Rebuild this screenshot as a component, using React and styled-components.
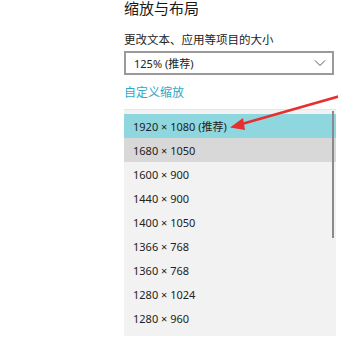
import styled, { createGlobalStyle } from 'styled-components'

const Global = createGlobalStyle`
  html, body {
    margin: 0;
    padding: 0;
    background: #ffffff;
  }
  body {
    font-family: "Noto Sans", "Noto Sans CJK SC", sans-serif;
    color: #1f1f1f;
    overflow: hidden;
  }
`

const Page = styled.div`
  position: relative;
  width: 338px;
  height: 339px;
  overflow: hidden;
  padding-left: 124px;
  box-sizing: border-box;
`

const Title = styled.h2`
  margin: 0;
  font-family: "Noto Sans CJK SC", sans-serif;
  font-size: 15px;
  font-weight: 400;
  line-height: 16px;
  color: #1a1a1a;
`

const Label = styled.div`
  margin-top: 16px;
  font-family: "Noto Sans CJK SC", sans-serif;
  font-size: 11.5px;
  line-height: 14px;
  color: #222;
`

const Select = styled.div`
  margin-top: 5px;
  width: 210px;
  height: 24px;
  box-sizing: border-box;
  border: 2px solid #9a9a9a;
  display: flex;
  align-items: center;
  justify-content: space-between;
  padding: 0 6px 0 8px;
  font-size: 11px;
  color: #222;
`

const Link = styled.div`
  margin-top: 9px;
  font-family: "Noto Sans CJK SC", sans-serif;
  font-size: 12px;
  line-height: 15px;
  color: #2fa9c4;
`

const List = styled.div`
  position: relative;
  margin-top: 10px;
  width: 212px;
  height: 227px;
  background: #f2f2f2;
  padding-top: 4px;
  box-sizing: border-box;
  border-top: 1px solid #e6e6e6;
`

const Row = styled.div`
  height: 24px;
  display: flex;
  align-items: center;
  padding-left: 9px;
  font-size: 11px;
  color: #222;
  background: ${p => (p.$selected ? '#8fd7de' : p.$hover ? '#d8d8d8' : 'transparent')};
`

const Scrollbar = styled.div`
  position: absolute;
  right: 2px;
  top: 1px;
  width: 2px;
  height: 127px;
  background: #8a8a8a;
`

const Arrow = styled.svg`
  position: absolute;
  left: 0;
  top: 0;
  pointer-events: none;
`

const items = [
  '1920 × 1080 (推荐)',
  '1680 × 1050',
  '1600 × 900',
  '1440 × 900',
  '1400 × 1050',
  '1366 × 768',
  '1360 × 768',
  '1280 × 1024',
  '1280 × 960',
]

export default function App() {
  return (
    <Page>
      <Global />
      <Title>缩放与布局</Title>
      <Label>更改文本、应用等项目的大小</Label>
      <Select>
        <span>125% (推荐)</span>
        <svg width="12" height="8" viewBox="0 0 12 8">
          <path d="M1 1.5 L6 6.5 L11 1.5" fill="none" stroke="#555" strokeWidth="1" />
        </svg>
      </Select>
      <Link>自定义缩放</Link>
      <List>
        {items.map((t, i) => (
          <Row key={t} $selected={i === 0} $hover={i === 1}>{t}</Row>
        ))}
        <Scrollbar />
      </List>
      <Arrow width="338" height="339" viewBox="0 0 338 339">
        <line x1="340" y1="96" x2="240" y2="124.5" stroke="#e5302f" strokeWidth="2.6" strokeLinecap="round" />
        <path d="M230 127.5 L243 118 L245 130 Z" fill="#e5302f" />
      </Arrow>
    </Page>
  )
}
